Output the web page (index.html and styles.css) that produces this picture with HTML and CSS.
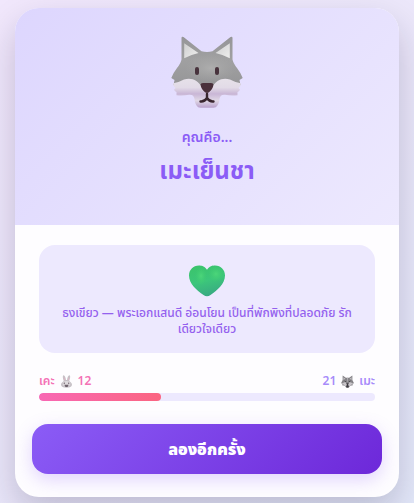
FILE: index.html
```
<!DOCTYPE html>
<html lang="th">

<head>
    <meta charset="UTF-8">
    <meta name="viewport" content="width=device-width, initial-scale=1">
    <title>เมะเย็นชา</title>
    <link rel="stylesheet" href="styles.css">
</head>

<body>

    <main class="card">
        <header class="hero">
            <svg class="hero-icon" viewBox="0 0 72 72" aria-hidden="true">
                <defs>
                    <linearGradient id="fur" x1="0" y1="0" x2="0" y2="1">
                        <stop offset="0" stop-color="#969698" />
                        <stop offset=".45" stop-color="#a0a0a1" />
                        <stop offset="1" stop-color="#959597" />
                    </linearGradient>
                    <radialGradient id="shine">
                        <stop offset="0" stop-color="#aeaeae" />
                        <stop offset="1" stop-color="#a4a4a4" stop-opacity="0" />
                    </radialGradient>
                    <linearGradient id="ear" x1="0" y1="0" x2="1" y2="1">
                        <stop offset="0" stop-color="#cfcfd0" />
                        <stop offset="1" stop-color="#eeeeed" />
                    </linearGradient>
                    <linearGradient id="muzzle" x1="0" y1="0" x2="0" y2="1">
                        <stop offset="0" stop-color="#e6e1e9" />
                        <stop offset=".3" stop-color="#e2dbe7" />
                        <stop offset=".52" stop-color="#c9b6d6" />
                        <stop offset=".75" stop-color="#e0d8e6" />
                        <stop offset="1" stop-color="#b9a0cc" />
                    </linearGradient>
                </defs>
                <path fill="url(#fur)" d="M10.5 2Q10.5 0 12.5 1L30.5 15.3Q36 16.5 41.5 15.3L59.5 1Q61.5 0 61.5 2V23.5Q62 27 66 32Q69.5 36.5 71.7 42L68.5 44L69.5 49L60 52H12L2.5 49L3.5 44L.3 42Q2.5 36.5 6 32Q10 27 10.5 23.5Z" />
                <ellipse fill="url(#shine)" cx="40" cy="32" rx="26" ry="14" />
                <path fill="url(#ear)" d="M13.2 7.2L27.5 17Q21 18.2 13.2 22.2Z" />
                <path fill="url(#ear)" d="M58.8 7.2L44.5 17Q51 18.2 58.8 22.2Z" />
                <path fill="url(#muzzle)" d="M2.2 47.3Q9 46 13 43.6C21 41 27 45 31 51H41C45 45 51 41 59 43.6Q63 46 69.8 47.3Q70 50.5 67.5 52L69 53.8Q68 55.500 66.500 56V59.300Q60 60 54 58.800C50.500 58.500 49 60 48.500 63C48 68 46 71.800 42.500 71.800H29.500C26 71.800 24 68 23.500 63C23 60 21.500 58.500 18 58.800Q12 60 5.500 59.300V56Q4 55.500 3 53.800L4.500 52Q2 50.500 2.200 47.300Z" />
                <rect fill="#48333d" x="24" y="31" width="4" height="8" rx="2" />
                <rect fill="#48333d" x="44" y="31" width="4" height="8" rx="2" />
                <path fill="#4a303b" d="M29.5 48.5Q29.5 47 32 47H40Q42.5 47 42.5 48.5Q42 53 38 56.2Q36 57.8 34 56.2Q30 53 29.5 48.5Z" />
                <path class="mouth" d="M36 58V62Q33.5 66 29.500 65.500M36 62Q38.500 66 42.500 65.500" />
            </svg>
            <p class="hero-label">คุณคือ...</p>
            <h1 class="hero-title">เมะเย็นชา</h1>
        </header>

        <section class="content">
            <div class="flag">
                <svg class="flag-icon" viewBox="0 0 36 32" aria-hidden="true">
                    <defs>
                        <linearGradient id="heart" x1=".3" y1="0" x2=".6" y2="1">
                            <stop offset="0" stop-color="#3bc46c" />
                            <stop offset=".5" stop-color="#3cc67b" />
                            <stop offset="1" stop-color="#38a882" />
                        </linearGradient>
                        <radialGradient id="glow">
                            <stop offset="0" stop-color="#4cd67a" />
                            <stop offset="1" stop-color="#40cc70" stop-opacity="0" />
                        </radialGradient>
                    </defs>
                    <path fill="url(#heart)" d="M18 4.8C15.5 1 12.5.5 10 .5C4 .5 0 5 0 10.5C0 19 8 25.5 14.5 30Q18 32.5 21.5 30C28 25.5 36 19 36 10.5C36 5 32 .5 26 .5C23.5 .5 20.5 1 18 4.8Z" />
                    <ellipse fill="url(#glow)" cx="27" cy="9" rx="8" ry="8" />
                    <ellipse fill="url(#glow)" cx="12" cy="11" rx="6" ry="9" />
                </svg>
                <p class="flag-text">ธงเขียว — พระเอกแสนดี อ่อนโยน เป็นที่พักพิงที่ปลอดภัย รักเดียวใจเดียว</p>
            </div>

            <div class="score">
                <div class="score-labels">
                    <span class="score-uke">เคะ
                        <svg class="score-icon" viewBox="0 0 24 24" aria-hidden="true">
                            <path fill="#c6c1c6" d="M7 11C5 6 4.5 1 6.5.5C9 .5 10.5 5 11 9H13C13.5 5 15 .5 17.5.5C19.5 1 19 6 17 11C20 13 23 16 22 19C21 23 16 23.5 12 23.5S3 23 2 19C1 16 4 13 7 11Z" />
                            <path fill="#dcb5c5" d="M7 3Q9 5 9.5 9L8 10Q6.5 6 7 3ZM17 3Q15 5 14.5 9L16 10Q17.5 6 17 3Z" />
                            <ellipse fill="#dedadd" cx="12" cy="16" rx="7" ry="5" />
                            <circle fill="#6a5f69" cx="8" cy="15" r="1.3" />
                            <circle fill="#6a5f69" cx="16" cy="15" r="1.3" />
                            <path fill="#6d616b" d="M8 18H16L14 22H10Z" />
                        </svg>
                        12</span>
                    <span class="score-seme">21
                        <svg class="score-icon" viewBox="0 0 24 24" aria-hidden="true">
                            <path fill="#858387" d="M3 1L9 5H15L21 1V9L24 15L21 16L22 19L17 20L14 24H10L7 20L2 19L3 16L0 15L3 9Z" />
                            <path fill="#c8c4c9" d="M4.5 4L8 7L4.5 9ZM19.5 4L16 7L19.5 9ZM2 15L8 13L11 18H13L16 13L22 15L18 19L14 22H10L6 19Z" />
                            <path fill="#3c393f" d="M6 10L10 12L8 13ZM18 10L14 12L16 13ZM10 15H14L13 18L15 21L12 23L9 21L11 18Z" />
                            <path fill="#b5b1b6" d="M11 5H13L12.5 13H11.5Z" />
                        </svg>
                        เมะ</span>
                </div>
                <div class="bar">
                    <div class="bar-fill" style="width: 36.36%"></div>
                </div>
            </div>

            <button class="retry" type="button">ลองอีกครั้ง</button>
        </section>
    </main>

</body>

</html>
```
FILE: styles.css
```
* {
    margin: 0;
    box-sizing: border-box;
}

body {
    min-height: 100vh;
    padding: 8px 15px 6px;
    background: linear-gradient(135deg, #f1e7fc 0%, #ebe7fa 50%, #e4e9fa 100%);
    font-family: 'Noto Sans', 'Noto Sans Thai', sans-serif;
}

.card {
    max-width: 480px;
    margin: 0 auto;
    border-radius: 24px;
    overflow: hidden;
    background-color: #fefdff;
    box-shadow: 0 16px 36px rgba(20, 10, 50, 0.2);
}

/* top part with the wolf */

.hero {
    display: flex;
    flex-direction: column;
    align-items: center;
    padding: 28px 24px 37px;
    background: linear-gradient(135deg, #ddd6fe, #ede9fe);
    color: #8b5cf6;
    text-align: center;
}

.hero-icon {
    width: 72px;
    height: 72px;
    margin-bottom: 19px;
}

.mouth {
    fill: none;
    stroke: #38252e;
    stroke-width: 2.4;
    stroke-linecap: round;
    stroke-linejoin: round;
}

.hero-label {
    font-size: 14px;
    font-weight: 600;
    line-height: 20px;
}

.hero-title {
    margin-top: 5px;
    font-size: 24px;
    font-weight: 700;
    line-height: 36px;
}

/* white part */

.content {
    padding: 20px 24px 23px;
}

.flag {
    padding: 20px 20px 16px;
    border-radius: 16px;
    background-color: #ede9fe;
    text-align: center;
}

.flag-icon {
    display: block;
    width: 36px;
    height: 32px;
    margin: 0 auto 8px;
}

.flag-text {
    color: #9461ee;
    font-size: 12px;
    font-weight: 500;
    line-height: 16px;
}

.score {
    margin-top: 20px;
}

.score-labels {
    display: flex;
    justify-content: space-between;
    margin-bottom: 4px;
    font-size: 12px;
    font-weight: 600;
    line-height: 16px;
}

.score-labels span {
    display: flex;
    align-items: center;
    gap: 5px;
}

.score-uke {
    color: #f472b6;
}

.score-seme {
    color: #a78bfa;
}

.score-icon {
    width: 13px;
    height: 13px;
}

.bar {
    height: 8px;
    border-radius: 4px;
    overflow: hidden;
    background-color: #ede9fe;
}

.bar-fill {
    height: 100%;
    border-radius: 4px;
    background: linear-gradient(90deg, #f868b4, #fb6581);
}

.retry {
    display: block;
    width: calc(100% + 14px);
    margin: 23px -7px 0;
    padding: 13px;
    border: none;
    border-radius: 16px;
    background: linear-gradient(135deg, #8b5cf6, #6d28d9);
    box-shadow: 0 6px 18px rgba(139, 92, 246, 0.25);
    color: white;
    font-family: inherit;
    font-size: 16px;
    font-weight: 900;
    line-height: 24px;
    cursor: pointer;
}

.retry:hover {
    background: linear-gradient(135deg, #7c4df0, #5f20c4);
}
```
